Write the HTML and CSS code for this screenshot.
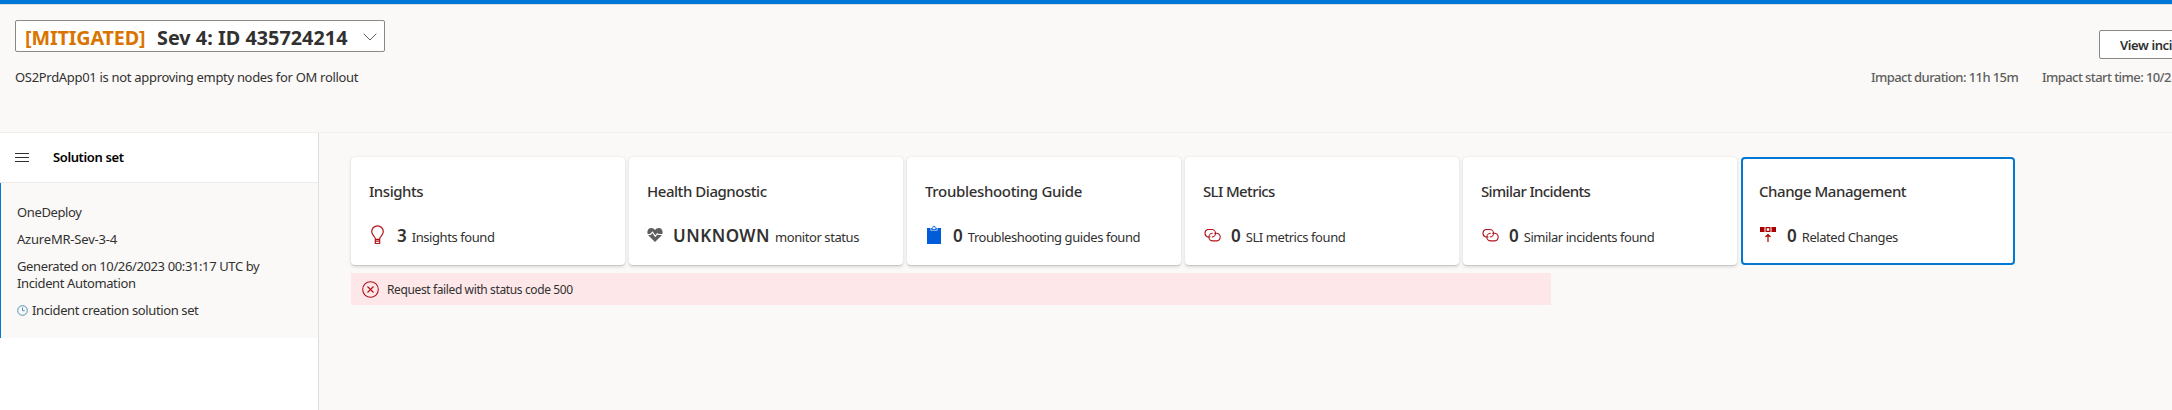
FILE: index.html
```html
<!DOCTYPE html>
<html lang="en">
<head>
<meta charset="utf-8">
<title>Incident 435724214</title>
<link rel="stylesheet" href="styles.css">
</head>
<body>
<div class="topbar"></div>
<header class="header">
  <div class="header-left">
    <div class="incident-select">
      <span class="state">[MITIGATED]</span>
      <span class="incident-id">Sev 4: ID 435724214</span>
      <svg class="chevron" width="14" height="8" viewBox="0 0 14 8"><path d="M.7.7 7 7 13.3.7" fill="none" stroke="#605e5c"/></svg>
    </div>
    <div class="subtitle">OS2PrdApp01 is not approving empty nodes for OM rollout</div>
  </div>
  <div class="header-right">
    <button class="view-button">View inci</button>
    <div class="impact"><span class="duration">Impact duration: 11h 15m</span><span class="start">Impact start time: 10/2</span></div>
  </div>
</header>
<div class="body">
  <aside class="sidebar">
    <div class="sidebar-head">
      <svg width="14" height="9" viewBox="0 0 14 9"><path d="M0 .5h14M0 4.5h14M0 8.5h14" stroke="#323130"/></svg>
      <span class="sidebar-title">Solution set</span>
    </div>
    <div class="solution">
      <p>OneDeploy</p>
      <p class="service">AzureMR-Sev-3-4</p>
      <p>Generated on 10/26/2023 00:31:17 UTC by<br>Incident Automation</p>
      <p class="created"><svg width="11" height="11" viewBox="0 0 11 11"><g fill="none" stroke="#4b93b8"><circle cx="5.5" cy="5.5" r="4.8"/><path d="M5.5 2.5v3.2h2.3"/></g></svg><span>Incident creation solution set</span></p>
    </div>
  </aside>
  <main class="main">
    <div class="cards">
      <section class="card">
        <h2>Insights</h2>
        <div class="metric">
          <svg class="icon" width="20" height="20" viewBox="0 0 20 20"><path d="M6.500 14.300C6.500 11.500 2.700 10.500 2.700 6.600A5.800 5.800 0 0 1 14.300 6.600C14.300 10.500 10.500 11.500 10.500 14.300M6.300 14.300h4.400v4.200H6.300zM6.300 16.200h4.400" fill="none" stroke="#b3141b" stroke-width="1.200"/></svg>
          <b>3</b><span>Insights found</span>
        </div>
      </section>
      <section class="card">
        <h2>Health Diagnostic</h2>
        <div class="metric wide">
          <svg class="icon" width="20" height="20" viewBox="0 0 20 20"><path d="M8 17 1.500 10.500C-.7 8 .3 3 4.300 3 6 3 7 3.700 8 5c1-1.300 2-2 3.700-2 4 0 5 5 2.800 7.500z" fill="#605e5c"/><path d="M0 9.500h3.500L5.500 7.200 8.300 11.300 10.300 8.700 11.500 9.500H16" fill="none" stroke="#fff" stroke-width="1.200"/></svg>
          <b>UNKNOWN</b><span>monitor status</span>
        </div>
      </section>
      <section class="card">
        <h2 class="guide-title">Troubleshooting Guide</h2>
        <div class="metric">
          <svg class="icon" width="20" height="20" viewBox="0 0 20 20"><path d="M2 3h14v16H2z" fill="#015cda"/><path d="M5.500 3v2.500h7V3z" fill="#fff"/><path d="M6.500 4.500V3.200H7.800V2.400a1.200 1.200 0 0 1 2.400 0v.8h1.300v1.300z" fill="#fff" stroke="#015cda" stroke-width=".9"/></svg>
          <b>0</b><span>Troubleshooting guides found</span>
        </div>
      </section>
      <section class="card">
        <h2 class="tight-title">SLI Metrics</h2>
        <div class="metric">
          <svg class="icon" width="20" height="20" viewBox="0 0 20 20"><g fill="none" stroke="#b3141b" stroke-width="1.100"><path d="M7.500 12H4.600a4 4 0 0 1 0-7.500h4.200a3.700 3.700 0 0 1 0 7.500"/><path d="M11.200 8.200h2.700a3.900 3.900 0 0 1 0 7.700H9.700a3.700 3.700 0 0 1 0-7.700"/></g></svg>
          <b>0</b><span>SLI metrics found</span>
        </div>
      </section>
      <section class="card">
        <h2 class="tight-title">Similar Incidents</h2>
        <div class="metric">
          <svg class="icon" width="20" height="20" viewBox="0 0 20 20"><g fill="none" stroke="#b3141b" stroke-width="1.100"><path d="M7.500 12H4.600a4 4 0 0 1 0-7.500h4.200a3.700 3.700 0 0 1 0 7.500"/><path d="M11.200 8.200h2.700a3.900 3.900 0 0 1 0 7.700H9.700a3.700 3.700 0 0 1 0-7.700"/></g></svg>
          <b>0</b><span>Similar incidents found</span>
        </div>
      </section>
      <section class="card selected">
        <h2>Change Management</h2>
        <div class="metric">
          <svg class="icon" width="20" height="20" viewBox="0 0 20 20"><path d="M1 2h4.500v5H1zM12.500 2H17v5h-4.500z" fill="#a80000"/><path d="M7.100 2.600h3.800v3.800H7.100zM9 17V9.800M6.500 12 9 9.500l2.500 2.500" fill="none" stroke="#a80000" stroke-width="1.200"/></svg>
          <b>0</b><span>Related Changes</span>
        </div>
      </section>
    </div>
    <div class="error">
      <svg width="17" height="17" viewBox="0 0 17 17"><path d="M5.500 5.500l6 6m0-6-6 6" stroke="#b3141b" stroke-width="1.200"/><circle cx="8.500" cy="8.500" r="7.800" fill="none" stroke="#b3141b" stroke-width="1.100"/></svg>
      <span>Request failed with status code 500</span>
    </div>
  </main>
</div>
</body>
</html>
```
FILE: styles.css
```css
* { box-sizing: border-box; }
body {
  margin: 0;
  height: 410px;
  overflow: hidden;
  display: flex;
  flex-direction: column;
  background: #faf9f8;
  color: #323130;
  font: 13px/17px "Noto Sans", "Open Sans", sans-serif;
  letter-spacing: -.38px;
  white-space: nowrap;
}
svg { display: block; flex: none; }
p, h2 { margin: 0; }
.topbar { height: 5px; flex: none; background: #0078d7; border-bottom: 1px solid #dcdcdc; }
.header {
  height: 128px;
  flex: none;
  display: flex;
  justify-content: space-between;
  border-bottom: 1px solid #f0efee;
}
.header-left { padding: 15px 0 0 15px; }
.incident-select {
  width: 370px;
  height: 32px;
  display: flex;
  align-items: center;
  padding: 4px 7px 0 9px;
  background: #fff;
  border: 1px solid #8a8886;
  border-radius: 2px;
  font-size: 19.800px;
  line-height: 28px;
  font-weight: 700;
}
.state { width: 132px; color: #da7400; letter-spacing: -.15px; }
.incident-id { flex: 1; letter-spacing: .03px; }
.chevron { margin: -3px 0 0; }
.subtitle { margin-top: 17px; line-height: 17px; letter-spacing: -.31px; }
.header-right { width: 301px; padding-top: 25px; overflow: hidden; }
.view-button {
  display: block;
  width: 140px;
  height: 29px;
  margin-left: 228px;
  padding: 0 20px;
  background: #fff;
  border: 1px solid #8a8886;
  border-radius: 2px;
  color: #323130;
  font: 600 13px/26px "Noto Sans", "Open Sans", sans-serif;
  letter-spacing: -.4px;
  text-align: left;
}
.impact { display: flex; margin-top: 10px; color: #605e5c; font-weight: 500; letter-spacing: -.58px; }
.duration { width: 171px; flex: none; }
.body { display: flex; flex: 1; }
.sidebar { width: 319px; flex: none; background: #fff; border-right: 1px solid #dedede; }
.sidebar-head {
  height: 50px;
  display: flex;
  align-items: center;
  gap: 24px;
  padding-left: 15px;
  border-bottom: 1px solid #edebe9;
  color: #000;
}
.sidebar-title { font-weight: 600; }
.solution {
  height: 155px;
  padding: 21px 0 0 16px;
  display: flex;
  flex-direction: column;
  gap: 10px;
  border-left: 1px solid #0078d4;
  background: #faf9f8;
}
.service { letter-spacing: -.2px; }
.created { display: flex; align-items: center; gap: 4px; }
.main { padding: 24px 0 0 32px; }
.cards { display: flex; gap: 4px; }
.card {
  width: 274px;
  height: 108px;
  padding: 23px 18px 0;
  background: #fff;
  border-radius: 4px;
  box-shadow: 0 1.600px 3.600px rgba(0, 0, 0, .13), 0 .3px .9px rgba(0, 0, 0, .11);
}
.selected { border: 2px solid #0078d4; padding: 21px 16px 0; box-shadow: none; }
.card h2 { font-size: 15px; line-height: 22px; font-weight: 500; letter-spacing: -.46px; }
.card .guide-title { letter-spacing: -.33px; }
.card .tight-title { letter-spacing: -.63px; }
.metric { display: flex; align-items: baseline; margin-top: 22px; line-height: 24px; letter-spacing: -.43px; }
.metric .icon { align-self: flex-start; margin: 1px 8px 0 0; }
.wide .icon { margin-right: 6px; }
.metric b { font-size: 17px; letter-spacing: 0; font-weight: 600; margin-right: 5px; }
.metric.wide b { letter-spacing: .5px; }
.error {
  width: 1200px;
  height: 32px;
  margin-top: 8px;
  padding-left: 11px;
  display: flex;
  align-items: center;
  gap: 8px;
  background: #fde7e9;
  font-size: 12px;
}
```
